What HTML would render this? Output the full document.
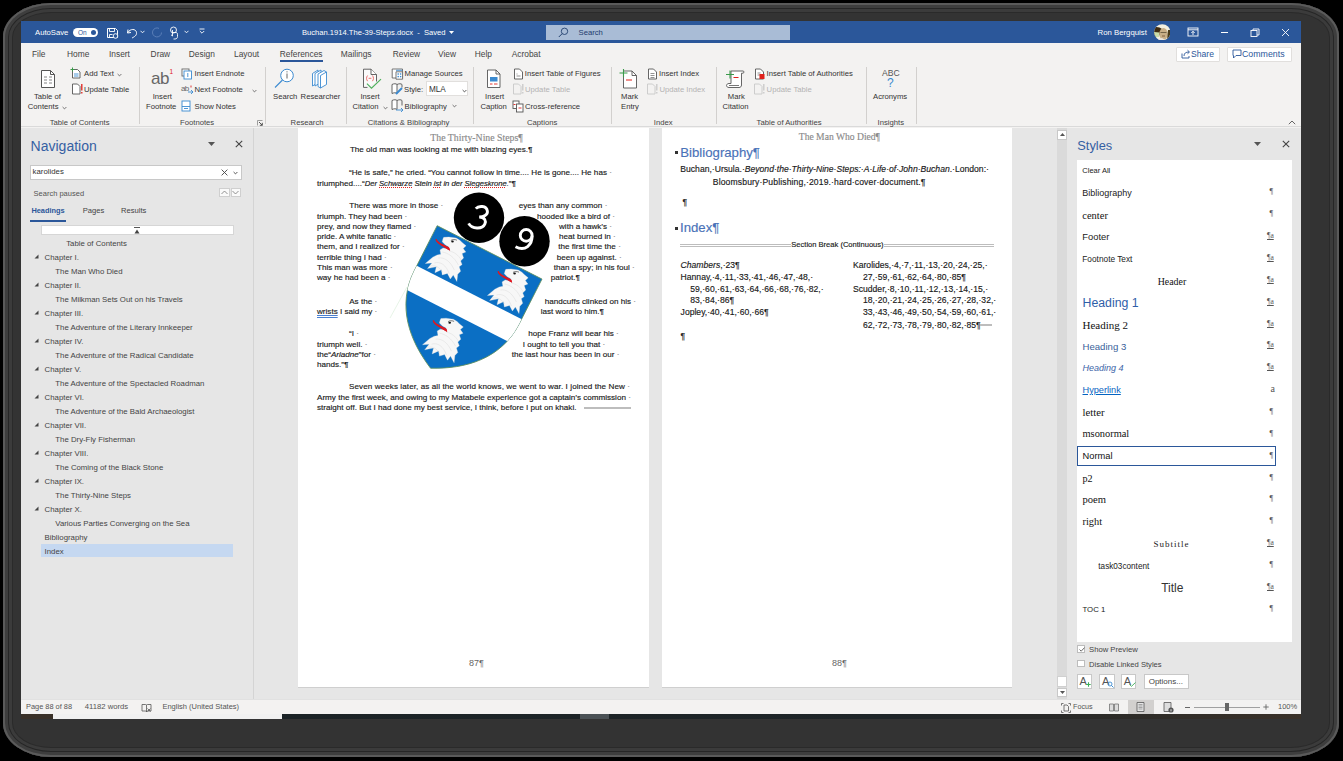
<!DOCTYPE html>
<html><head><meta charset="utf-8">
<style>
*{margin:0;padding:0;box-sizing:border-box}
html,body{width:1343px;height:761px;overflow:hidden;background:#000;font-family:"Liberation Sans",sans-serif}
.a{position:absolute;white-space:pre}
.pg .a{-webkit-text-stroke:0.15px currentColor}
#shadow{position:absolute;left:3px;top:3px;width:1336px;height:754px;border-radius:48px / 34px;background:#333;box-shadow:inset 0 0 0 2px #5a5a5a, inset 0 0 0 5px #3e3e3e, inset 0 0 0 6px #262626, inset 0 0 0 9px #3b3b3b, inset 0 0 0 10px #2a2a2a}
#win{position:absolute;left:21px;top:21px;width:1280px;height:693px;background:#f3f2f1;overflow:hidden}
#title{position:absolute;left:0;top:0;width:1280px;height:22px;background:#2b579a;color:#fff}
#tabs{position:absolute;left:0;top:22px;width:1280px;height:20px;background:#f3f2f1}
#ribbon{position:absolute;left:0;top:42px;width:1280px;height:64px;background:#f3f2f1;border-bottom:1px solid #dadada}
#nav{position:absolute;left:0;top:107px;width:233px;height:571px;background:#e6e6e6;border-right:1px solid #d4d4d4}
#doc{position:absolute;left:233px;top:107px;width:815px;height:571px;background:#e6e6e6}
#styles{position:absolute;left:1048px;top:107px;width:232px;height:571px;background:#e6e6e6}
#status{position:absolute;left:0;top:678px;width:1280px;height:15px;background:#f3f2f1;border-top:1px solid #e1e1e1}
u.sq{text-decoration:underline dotted #e02020;text-decoration-thickness:1px;text-underline-offset:1px}
u.gr{text-decoration:underline double #4a7fd0;text-decoration-thickness:0.5px}
.t{position:absolute;white-space:pre;font-size:7.7px;color:#444;line-height:10px}
</style></head><body>
<div id="shadow"></div>
<div id="win">
  <div id="title">
    <div class="a" style="left:14px;top:6.6px;font-size:7.7px;line-height:10px;color:#fff">AutoSave</div>
    <div class="a" style="left:52px;top:6.5px;width:25px;height:9px;border-radius:5px;background:#fff"></div>
    <div class="a" style="left:57px;top:6.5px;font-size:6.5px;line-height:9px;color:#2b579a">On</div>
    <div class="a" style="left:69.5px;top:8.5px;width:5px;height:5px;border-radius:50%;background:#2b579a"></div>
    <svg class="a" style="left:85px;top:6px" width="13" height="12" viewBox="0 0 13 12"><path d="M1.5 1.5h8l2 2v7h-10z" fill="none" stroke="#fff" stroke-width="1"/><path d="M3.5 1.5v3h5v-3M3.5 10.5v-3h3" fill="none" stroke="#fff" stroke-width="0.9"/><circle cx="9.5" cy="9" r="2.3" fill="#2b579a" stroke="#fff" stroke-width="0.9"/></svg>
    <svg class="a" style="left:105px;top:5px" width="13" height="13" viewBox="0 0 13 13"><path d="M2 3.5 L1.5 7 L5 6.5" fill="none" stroke="#fff" stroke-width="1"/><path d="M2 6.5 C4 2.5 10 2.5 10.5 6.5 C11 9.5 8 11 6 12" fill="none" stroke="#fff" stroke-width="1"/></svg>
    <svg class="a" style="left:119px;top:9px" width="5" height="4" viewBox="0 0 5 4"><path d="M0.5 0.8 L2.5 2.8 L4.5 0.8" fill="none" stroke="#fff" stroke-width="0.9"/></svg>
    <svg class="a" style="left:130px;top:5px" width="13" height="13" viewBox="0 0 13 13"><path d="M10.5 6.5 A4.5 4.5 0 1 1 8 2.4" fill="none" stroke="#5b7fb8" stroke-width="1"/></svg>
    <svg class="a" style="left:148px;top:4.5px" width="11" height="14" viewBox="0 0 11 14"><circle cx="4.5" cy="4" r="3" fill="none" stroke="#fff" stroke-width="0.9"/><path d="M3.5 4v6l-1.5-1.2M3.5 6.5h3.5c1 0 1.5 .8 1.5 1.8v2.2c0 1.5-1 2.5-2.5 2.5h-1.5" fill="none" stroke="#fff" stroke-width="0.9"/></svg>
    <svg class="a" style="left:163px;top:9px" width="5" height="4" viewBox="0 0 5 4"><path d="M0.5 0.8 L2.5 2.8 L4.5 0.8" fill="none" stroke="#fff" stroke-width="0.9"/></svg>
    <svg class="a" style="left:178px;top:7px" width="6" height="7" viewBox="0 0 6 7"><path d="M0.5 1h5M0.8 3l2.2 2.2 2.2-2.2" fill="none" stroke="#fff" stroke-width="0.9"/></svg>
    <div class="a" style="left:281px;top:6.6px;font-size:7.6px;line-height:10px;color:#fff">Buchan.1914.The-39-Steps.docx  -  Saved</div>
    <svg class="a" style="left:428px;top:9.5px" width="5" height="3" viewBox="0 0 5 3"><path d="M0 0h5L2.5 3z" fill="#fff"/></svg>
    <div class="a" style="left:524.5px;top:4px;width:244px;height:14.6px;background:#a9bcd6"></div>
    <svg class="a" style="left:537px;top:5.5px" width="11" height="11" viewBox="0 0 11 11"><circle cx="6.5" cy="4.3" r="3.2" fill="none" stroke="#23416f" stroke-width="0.9"/><path d="M4.2 6.6 L0.8 10" stroke="#23416f" stroke-width="1"/></svg>
    <div class="a" style="left:557.5px;top:6.6px;font-size:7.7px;line-height:10px;color:#1f3d6e">Search</div>
    <div class="a" style="left:1076.5px;top:6.6px;font-size:7.8px;line-height:10px;color:#fff">Ron Bergquist</div>
    <svg class="a" style="left:1132.9px;top:2.7px" width="16.5" height="16.5" viewBox="0 0 16.5 16.5"><defs><clipPath id="av"><circle cx="8.25" cy="8.25" r="8.1"/></clipPath></defs><g clip-path="url(#av)"><rect width="16.5" height="16.5" fill="#f4f0e0"/><path d="M0 3.5 C3 2.5 6 3.5 8 5 L7 9 L4 13 L0 13z" fill="#3d2a10"/><path d="M0 8 L5.5 8.5 L5 13 L0 13z" fill="#c9dcaa"/><ellipse cx="9.5" cy="10" rx="4.2" ry="6" fill="#c9ae86"/><path d="M6.5 8.5h6" stroke="#6a5a40" stroke-width="0.9"/><path d="M8 12h3" stroke="#7a5a3a" stroke-width="0.9"/><path d="M14 6 L16.5 6 L16.5 16.5 L13 16.5z" fill="#4a3a1a"/><path d="M3 15 L8 14 L12 16.5 H3z" fill="#e8e4e0"/></g></svg>
    <svg class="a" style="left:1166px;top:6px" width="12" height="10" viewBox="0 0 12 10"><rect x="1" y="1" width="10" height="8" fill="none" stroke="#fff" stroke-width="0.9"/><path d="M1 2.8h10" stroke="#fff" stroke-width="0.9"/><path d="M6 8V4.3M4.3 6 6 4.3 7.7 6" fill="none" stroke="#fff" stroke-width="0.9"/></svg>
    <div class="a" style="left:1199.5px;top:10.5px;width:7px;height:1px;background:#fff"></div>
    <svg class="a" style="left:1229px;top:6.5px" width="10" height="9" viewBox="0 0 10 9"><rect x="1" y="2.5" width="6" height="6" fill="none" stroke="#fff" stroke-width="0.9"/><path d="M3 2.5V1h6v6H7" fill="none" stroke="#fff" stroke-width="0.9"/></svg>
    <svg class="a" style="left:1260px;top:6.5px" width="9" height="9" viewBox="0 0 9 9"><path d="M1 1l7 7M8 1L1 8" stroke="#fff" stroke-width="0.9"/></svg>
  </div>
  <div id="tabs">
    <div class="a" style="left:11px;top:5.8px;font-size:8.4px;line-height:10px;color:#444">File</div>
    <div class="a" style="left:46px;top:5.8px;font-size:8.4px;line-height:10px;color:#444">Home</div>
    <div class="a" style="left:88px;top:5.8px;font-size:8.4px;line-height:10px;color:#444">Insert</div>
    <div class="a" style="left:129.6px;top:5.8px;font-size:8.4px;line-height:10px;color:#444">Draw</div>
    <div class="a" style="left:167.8px;top:5.8px;font-size:8.4px;line-height:10px;color:#444">Design</div>
    <div class="a" style="left:213px;top:5.8px;font-size:8.4px;line-height:10px;color:#444">Layout</div>
    <div class="a" style="left:258.7px;top:5.8px;font-size:8.4px;line-height:10px;color:#444">References</div>
    <div class="a" style="left:319.8px;top:5.8px;font-size:8.4px;line-height:10px;color:#444">Mailings</div>
    <div class="a" style="left:371.7px;top:5.8px;font-size:8.4px;line-height:10px;color:#444">Review</div>
    <div class="a" style="left:417px;top:5.8px;font-size:8.4px;line-height:10px;color:#444">View</div>
    <div class="a" style="left:453.7px;top:5.8px;font-size:8.4px;line-height:10px;color:#444">Help</div>
    <div class="a" style="left:490.7px;top:5.8px;font-size:8.4px;line-height:10px;color:#444">Acrobat</div>
    <div class="a" style="left:259px;top:17px;width:43px;height:2px;background:#2b579a"></div>
    <div class="a" style="left:1155px;top:3.5px;width:44px;height:15px;background:#fff;border:1px solid #e1dfdd;border-radius:1px"></div>
    <svg class="a" style="left:1160px;top:6px" width="10" height="10" viewBox="0 0 10 10"><path d="M1 4.5v4.5h7v-2" fill="none" stroke="#2b579a" stroke-width="0.9"/><path d="M3 7c0-3 2-4 5-4M6.5 1.2 8.5 3 6.5 4.8" fill="none" stroke="#2b579a" stroke-width="0.9"/></svg>
    <div class="a" style="left:1170px;top:6px;font-size:8.6px;line-height:10px;color:#2b579a">Share</div>
    <div class="a" style="left:1206px;top:3.5px;width:65px;height:15px;background:#fff;border:1px solid #e1dfdd;border-radius:1px"></div>
    <svg class="a" style="left:1211px;top:6px" width="10" height="10" viewBox="0 0 10 10"><path d="M1 1h8v5.5H4L1.5 9V6.5H1z" fill="none" stroke="#2b579a" stroke-width="0.9"/></svg>
    <div class="a" style="left:1221px;top:6px;font-size:8.8px;line-height:10px;color:#2b579a">Comments</div>
  </div>
  <div id="ribbon">
    <div class="a" style="left:117.6px;top:3.8px;width:1px;height:57.6px;background:#d2d0ce"></div>
    <div class="a" style="left:244.4px;top:3.8px;width:1px;height:57.6px;background:#d2d0ce"></div>
    <div class="a" style="left:324.8px;top:3.8px;width:1px;height:57.6px;background:#d2d0ce"></div>
    <div class="a" style="left:452.4px;top:3.8px;width:1px;height:57.6px;background:#d2d0ce"></div>
    <div class="a" style="left:589.6px;top:3.8px;width:1px;height:57.6px;background:#d2d0ce"></div>
    <div class="a" style="left:694.7px;top:3.8px;width:1px;height:57.6px;background:#d2d0ce"></div>
    <div class="a" style="left:845px;top:3.8px;width:1px;height:57.6px;background:#d2d0ce"></div>
    <div class="a" style="left:895px;top:3.8px;width:1px;height:57.6px;background:#d2d0ce"></div>
    <svg class="a" style="left:19px;top:5.5px" width="16" height="20" viewBox="0 0 16 20"><path d="M1.5 1.5h9l4 4v13h-13z" fill="#fff" stroke="#555" stroke-width="1"/><path d="M10.5 1.5v4h4" fill="none" stroke="#555" stroke-width="1"/><path d="M4 8h3M9 8h3M4 11h3M9 11h3M4 14h3M9 14h3" stroke="#777" stroke-width="0.9"/></svg>
    <div class="a" style="left:13px;top:28.8px;font-size:7.7px;line-height:10px;color:#333;">Table of</div>
    <div class="a" style="left:6.8px;top:39.4px;font-size:7.7px;line-height:10px;color:#333;">Contents</div>
    <svg class="a" style="left:41px;top:42.9px" width="5" height="4" viewBox="0 0 5 4"><path d="M0.6 1 L2.5 2.9 L4.4 1" fill="none" stroke="#555" stroke-width="0.8"/></svg>
    <svg class="a" style="left:49px;top:4px" width="12" height="12" viewBox="0 0 12 12"><path d="M2.5 2.5h5l2.5 2.5v6h-7.5z" fill="#fff" stroke="#555" stroke-width="0.9"/><path d="M0.5 2.5h4M2.5 0.5v4" stroke="#3a9a4a" stroke-width="1"/><path d="M4 7h4.5M4 9h4.5" stroke="#3b8ad0" stroke-width="0.9"/></svg>
    <div class="a" style="left:63px;top:5.8px;font-size:7.7px;line-height:10px;color:#333;">Add Text</div>
    <svg class="a" style="left:96px;top:9.8px" width="5" height="4" viewBox="0 0 5 4"><path d="M0.6 1 L2.5 2.9 L4.4 1" fill="none" stroke="#555" stroke-width="0.8"/></svg>
    <svg class="a" style="left:50px;top:20px" width="12" height="12" viewBox="0 0 12 12"><path d="M1.5 1h5l2.5 2.5v7.5h-7.5z" fill="#fff" stroke="#555" stroke-width="0.9"/><path d="M10.8 1v6.5M10.8 9v1.5" stroke="#e0201b" stroke-width="1.3"/></svg>
    <div class="a" style="left:63px;top:22.1px;font-size:7.7px;line-height:10px;color:#333;">Update Table</div>
    <div class="a" style="left:28.7px;top:55.1px;font-size:7.7px;line-height:10px;color:#333;color:#444">Table of Contents</div>
    <div class="a" style="left:130px;top:7px;font-size:17px;line-height:10px;color:#666;line-height:18px;letter-spacing:-0.5px">ab</div>
    <div class="a" style="left:148.5px;top:3.5px;font-size:6.5px;line-height:10px;color:#e0201b;">1</div>
    <div class="a" style="left:131.7px;top:28.8px;font-size:7.7px;line-height:10px;color:#333;">Insert</div>
    <div class="a" style="left:125px;top:39.4px;font-size:7.7px;line-height:10px;color:#333;">Footnote</div>
    <svg class="a" style="left:160px;top:5px" width="12" height="12" viewBox="0 0 12 12"><rect x="1" y="1" width="7" height="7" fill="#fff" stroke="#666" stroke-width="0.9"/><rect x="3" y="3" width="7.5" height="8" fill="#fff" stroke="#3b8ad0" stroke-width="0.9"/><path d="M6.8 5v4" stroke="#3b8ad0" stroke-width="0.9"/></svg>
    <div class="a" style="left:173.5px;top:5.8px;font-size:7.7px;line-height:10px;color:#333;">Insert Endnote</div>
    <div class="a" style="left:160px;top:20.6px;font-size:8px;line-height:10px;color:#666;letter-spacing:-0.6px">ab</div>
    <svg class="a" style="left:166px;top:22px" width="7" height="11" viewBox="0 0 7 11"><path d="M4 0.5v2" stroke="#e0201b" stroke-width="0.9"/><path d="M1 7h5M4 5l2 2-2 2" fill="none" stroke="#3b8ad0" stroke-width="0.9"/></svg>
    <div class="a" style="left:173.5px;top:22.1px;font-size:7.7px;line-height:10px;color:#333;">Next Footnote</div>
    <svg class="a" style="left:231px;top:25.6px" width="5" height="4" viewBox="0 0 5 4"><path d="M0.6 1 L2.5 2.9 L4.4 1" fill="none" stroke="#555" stroke-width="0.8"/></svg>
    <svg class="a" style="left:160px;top:37px" width="10" height="12" viewBox="0 0 10 12"><rect x="1" y="1" width="8" height="10" fill="#fff" stroke="#3b8ad0" stroke-width="0.9"/><path d="M1 6.5h8M3 8.5h4" stroke="#3b8ad0" stroke-width="0.9"/></svg>
    <div class="a" style="left:173.5px;top:39.2px;font-size:7.7px;line-height:10px;color:#333;">Show Notes</div>
    <div class="a" style="left:159px;top:55.1px;font-size:7.7px;line-height:10px;color:#333;color:#444">Footnotes</div>
    <svg class="a" style="left:236.3px;top:56.5px" width="6" height="6" viewBox="0 0 6 6"><path d="M0.5 5.5v-5h5" fill="none" stroke="#888" stroke-width="0.8"/><path d="M2 2 5.2 5.2M5.3 2.8V5.3H2.8" fill="none" stroke="#444" stroke-width="0.9"/></svg>
    <svg class="a" style="left:253px;top:5px" width="21" height="21" viewBox="0 0 21 21"><circle cx="13" cy="7.5" r="6.3" fill="#fff" stroke="#3b8ad0" stroke-width="1"/><path d="M8.5 12 L1 19.5" stroke="#3b8ad0" stroke-width="1.1"/><path d="M13 5.5v5" stroke="#555" stroke-width="0.9"/><circle cx="13" cy="3.8" r="0.6" fill="#555"/></svg>
    <div class="a" style="left:252px;top:28.8px;font-size:7.7px;line-height:10px;color:#333;">Search</div>
    <svg class="a" style="left:290px;top:5px" width="17" height="21" viewBox="0 0 17 21"><path d="M1.5 5.5 7 2v12.5l-5.5 3.5z" fill="#fff" stroke="#3b8ad0" stroke-width="0.9"/><path d="M4 5.5 10 2v12.5L4 18z" fill="#fff" stroke="#3b8ad0" stroke-width="0.9"/><path d="M7 6 13 2.5l2.5 1.5v12.5L9.5 20 7 18.5z" fill="#fff" stroke="#3b8ad0" stroke-width="0.9"/><path d="M9.5 7.5 15.5 4M9.5 7.5V20" fill="none" stroke="#3b8ad0" stroke-width="0.9"/></svg>
    <div class="a" style="left:279.6px;top:28.8px;font-size:7.7px;line-height:10px;color:#333;">Researcher</div>
    <div class="a" style="left:269.6px;top:55.1px;font-size:7.7px;line-height:10px;color:#333;color:#444">Research</div>
    <svg class="a" style="left:341px;top:5px" width="21" height="22" viewBox="0 0 21 22"><path d="M5.5 19.4H1.5V1.2h7.5l5.5 5.3v7" fill="#fafafa" stroke="#555" stroke-width="0.9"/><path d="M9 1.2v5.3h5.5" fill="#fff" stroke="#555" stroke-width="0.9"/><path d="M5.6 7.5c-1.4 1.7-1.4 4 0 5.7M10.4 7.5c1.4 1.7 1.4 4 0 5.7M6.6 10.3h2.8" fill="none" stroke="#e96060" stroke-width="0.9"/><path d="M4.9 15.6 9.5 20.2 19 11.2" fill="none" stroke="#4caf5a" stroke-width="1.1"/></svg>
    <div class="a" style="left:339.4px;top:28.8px;font-size:7.7px;line-height:10px;color:#333;">Insert</div>
    <div class="a" style="left:331.4px;top:39.4px;font-size:7.7px;line-height:10px;color:#333;">Citation</div>
    <svg class="a" style="left:362px;top:42.9px" width="5" height="4" viewBox="0 0 5 4"><path d="M0.6 1 L2.5 2.9 L4.4 1" fill="none" stroke="#555" stroke-width="0.8"/></svg>
    <svg class="a" style="left:369.5px;top:4.5px" width="13" height="12" viewBox="0 0 13 12"><path d="M1.2 1h10.3v9H1.2z" fill="#fff" stroke="#666" stroke-width="0.9"/><path d="M5 2.3h6.3" stroke="#3b8ad0" stroke-width="0.9"/><path d="M5 3.8h6.6v7.4H5z" fill="#fff" stroke="#666" stroke-width="0.9"/><rect x="6.5" y="5.3" width="1.4" height="1.4" fill="#3b8ad0"/><rect x="8.9" y="5.3" width="1.4" height="1.4" fill="#3b8ad0"/><rect x="6.5" y="7.9" width="1.4" height="1.4" fill="#3b8ad0"/><rect x="8.9" y="7.9" width="1.4" height="1.4" fill="#3b8ad0"/></svg>
    <div class="a" style="left:383.6px;top:5.8px;font-size:7.7px;line-height:10px;color:#333;">Manage Sources</div>
    <svg class="a" style="left:369.5px;top:19.5px" width="12" height="13" viewBox="0 0 12 13"><path d="M1 1.5c2-1 4-1 5 0v9c-1-1-3-1-5 0z" fill="#fff" stroke="#555" stroke-width="0.9"/><path d="M6 1.5c2-1 4-1 5 0v3" fill="none" stroke="#555" stroke-width="0.9"/><path d="M11 5 5 11" stroke="#3b8ad0" stroke-width="2"/></svg>
    <div class="a" style="left:383px;top:22.1px;font-size:7.7px;line-height:10px;color:#333;">Style:</div>
    <div class="a" style="left:405px;top:18.4px;width:42.3px;height:14.5px;background:#fff;border:1px solid #e1dfdd"></div>
    <div class="a" style="left:408px;top:22.1px;font-size:8.2px;line-height:10px;color:#333;">MLA</div>
    <svg class="a" style="left:440.5px;top:25.6px" width="5" height="4" viewBox="0 0 5 4"><path d="M0.6 1 L2.5 2.9 L4.4 1" fill="none" stroke="#333" stroke-width="0.8"/></svg>
    <svg class="a" style="left:369.5px;top:36px" width="13" height="13" viewBox="0 0 13 13"><path d="M1 1.5c2-1 4-1 5 0v9c-1-1-3-1-5 0z" fill="#fff" stroke="#555" stroke-width="0.9"/><path d="M6 1.5c2-1 4-1 5 0v5" fill="none" stroke="#555" stroke-width="0.9"/><path d="M5 11h7M10 9l2 2-2 2" fill="none" stroke="#3b8ad0" stroke-width="0.9"/></svg>
    <div class="a" style="left:383.6px;top:39.2px;font-size:7.7px;line-height:10px;color:#333;">Bibliography</div>
    <svg class="a" style="left:431px;top:41.4px" width="5" height="4" viewBox="0 0 5 4"><path d="M0.6 1 L2.5 2.9 L4.4 1" fill="none" stroke="#555" stroke-width="0.8"/></svg>
    <div class="a" style="left:346.8px;top:55.1px;font-size:7.7px;line-height:10px;color:#333;color:#444">Citations &amp; Bibliography</div>
    <svg class="a" style="left:465px;top:5.5px" width="16" height="20" viewBox="0 0 16 20"><path d="M1.5 1h8.5l4 4v13.5h-12.5z" fill="#fff" stroke="#555" stroke-width="0.9"/><path d="M10 1v4h4" fill="none" stroke="#555" stroke-width="0.9"/><rect x="4" y="8" width="7.5" height="4.5" fill="#3b8ad0"/><path d="M4 15h2.5M8 15h3.5" stroke="#e0201b" stroke-width="0.9"/></svg>
    <div class="a" style="left:464px;top:28.8px;font-size:7.7px;line-height:10px;color:#333;">Insert</div>
    <div class="a" style="left:459.4px;top:39.4px;font-size:7.7px;line-height:10px;color:#333;">Caption</div>
    <svg class="a" style="left:491.5px;top:4.5px" width="11" height="12" viewBox="0 0 11 12"><path d="M1.5 1h5l3 3v7h-8z" fill="#fff" stroke="#555" stroke-width="0.9"/><path d="M3.5 6h1M3.5 8h4" stroke="#777" stroke-width="0.8"/></svg>
    <div class="a" style="left:503.8px;top:5.8px;font-size:7.7px;line-height:10px;color:#333;">Insert Table of Figures</div>
    <svg class="a" style="left:491px;top:20px" width="12" height="12" viewBox="0 0 12 12"><path d="M1.5 1h5l2.5 2.5v7.5h-7.5z" fill="#f3f2f1" stroke="#c8c8c8" stroke-width="0.9"/><path d="M10.8 1v6.5M10.8 9v1.5" stroke="#c8c8c8" stroke-width="1.3"/></svg>
    <div class="a" style="left:504px;top:22.1px;font-size:7.7px;line-height:10px;color:#b3b3b3;">Update Table</div>
    <svg class="a" style="left:491px;top:36.5px" width="12" height="13" viewBox="0 0 12 13"><rect x="1" y="1" width="6" height="7.5" fill="#fff" stroke="#555" stroke-width="0.9"/><rect x="4.5" y="4" width="6.5" height="8" fill="#fff" stroke="#555" stroke-width="0.9"/><path d="M6.5 8h3M1.5 4.5h2" stroke="#e0201b" stroke-width="0.9"/></svg>
    <div class="a" style="left:504px;top:39.2px;font-size:7.7px;line-height:10px;color:#333;">Cross-reference</div>
    <div class="a" style="left:506px;top:55.1px;font-size:7.7px;line-height:10px;color:#333;color:#444">Captions</div>
    <svg class="a" style="left:598px;top:4.5px" width="19" height="21" viewBox="0 0 19 21"><path d="M4.5 3h8.5l4.5 4.5v12.5h-13z" fill="#fff" stroke="#555" stroke-width="0.9"/><path d="M13 3v4.5h4.5" fill="none" stroke="#555" stroke-width="0.9"/><path d="M0.5 5h8M4.5 1v8" stroke="#3a9a4a" stroke-width="1.1"/><path d="M7 12h6" stroke="#e0201b" stroke-width="1"/></svg>
    <div class="a" style="left:600px;top:28.8px;font-size:7.7px;line-height:10px;color:#333;">Mark</div>
    <div class="a" style="left:600px;top:39.4px;font-size:7.7px;line-height:10px;color:#333;">Entry</div>
    <svg class="a" style="left:626px;top:4.5px" width="11" height="12" viewBox="0 0 11 12"><path d="M1.5 1h5l3 3v7h-8z" fill="#fff" stroke="#555" stroke-width="0.9"/><path d="M3.5 5.5h4M3.5 7.5h4M3.5 9.5h4" stroke="#777" stroke-width="0.8"/></svg>
    <div class="a" style="left:638px;top:5.8px;font-size:7.7px;line-height:10px;color:#333;">Insert Index</div>
    <svg class="a" style="left:625px;top:20px" width="12" height="12" viewBox="0 0 12 12"><path d="M1.5 1h5l2.5 2.5v7.5h-7.5z" fill="#f3f2f1" stroke="#c8c8c8" stroke-width="0.9"/><path d="M10.8 1v6.5M10.8 9v1.5" stroke="#c8c8c8" stroke-width="1.3"/></svg>
    <div class="a" style="left:638.4px;top:22.1px;font-size:7.7px;line-height:10px;color:#b3b3b3;">Update Index</div>
    <div class="a" style="left:632.8px;top:55.1px;font-size:7.7px;line-height:10px;color:#333;color:#444">Index</div>
    <svg class="a" style="left:704px;top:4.5px" width="21" height="21" viewBox="0 0 21 21"><path d="M6 3h12c1.2 0 1.5 1.8 0 2.2h-1.5V17c0 1.5-1 2.5-2.5 2.5H4c-1.5 0-2.5-1-2.5-2s1-2 2.5-2h2z" fill="#fff" stroke="#555" stroke-width="0.9"/><path d="M4 17.5h10" stroke="#555" stroke-width="0.8"/><path d="M1 6.5h8M5 2.5v8" stroke="#3a9a4a" stroke-width="1.1"/><path d="M8.5 9.5h5" stroke="#e0201b" stroke-width="1"/></svg>
    <div class="a" style="left:706.8px;top:28.8px;font-size:7.7px;line-height:10px;color:#333;">Mark</div>
    <div class="a" style="left:701.4px;top:39.4px;font-size:7.7px;line-height:10px;color:#333;">Citation</div>
    <svg class="a" style="left:733px;top:4.5px" width="12" height="12" viewBox="0 0 12 12"><path d="M1.5 1h5l3 3v7h-8z" fill="#fff" stroke="#555" stroke-width="0.9"/><path d="M3.5 5h3M3.5 7h3" stroke="#777" stroke-width="0.8"/><rect x="5.5" y="6" width="5" height="5" fill="#e0201b"/></svg>
    <div class="a" style="left:745.6px;top:5.8px;font-size:7.7px;line-height:10px;color:#333;">Insert Table of Authorities</div>
    <svg class="a" style="left:732px;top:20px" width="12" height="12" viewBox="0 0 12 12"><path d="M1.5 1h5l2.5 2.5v7.5h-7.5z" fill="#f3f2f1" stroke="#c8c8c8" stroke-width="0.9"/><path d="M10.8 1v6.5M10.8 9v1.5" stroke="#c8c8c8" stroke-width="1.3"/></svg>
    <div class="a" style="left:745.6px;top:22.1px;font-size:7.7px;line-height:10px;color:#b3b3b3;">Update Table</div>
    <div class="a" style="left:735.6px;top:55.1px;font-size:7.7px;line-height:10px;color:#333;color:#444">Table of Authorities</div>
    <div class="a" style="left:861px;top:5.3px;font-size:8.6px;line-height:10px;color:#555;">ABC</div>
    <div class="a" style="left:866px;top:14px;font-size:12px;line-height:10px;color:#3b8ad0;line-height:13px">?</div>
    <div class="a" style="left:852px;top:28.8px;font-size:7.7px;line-height:10px;color:#333;">Acronyms</div>
    <div class="a" style="left:856.5px;top:55.1px;font-size:7.7px;line-height:10px;color:#333;color:#444">Insights</div>
    <svg class="a" style="left:1267px;top:57px" width="8" height="5" viewBox="0 0 8 5"><path d="M0.8 4.2 4 1 7.2 4.2" fill="none" stroke="#555" stroke-width="0.9"/></svg>
  </div>
  <div id="nav">
    <div class="a" style="left:9.6px;top:10.2px;font-size:14px;line-height:16px;color:#3560a3">Navigation</div>
    <svg class="a" style="left:186.5px;top:13.5px" width="7" height="4" viewBox="0 0 7 4"><path d="M0 0h7L3.5 4z" fill="#555"/></svg>
    <svg class="a" style="left:213.5px;top:12.3px" width="8" height="8" viewBox="0 0 8 8"><path d="M0.8 0.8l6.4 6.4M7.2 0.8L0.8 7.2" stroke="#444" stroke-width="1.1"/></svg>
    <div class="a" style="left:9.2px;top:36.8px;width:211.4px;height:15px;background:#fff;border:1px solid #c8c8c8"></div>
    <div class="a" style="left:11.6px;top:39.1px;font-size:7.8px;line-height:10px;color:#333;">karolides</div>
    <svg class="a" style="left:199.5px;top:41px" width="7" height="7" viewBox="0 0 7 7"><path d="M0.6 0.6l5.8 5.8M6.4 0.6L0.6 6.4" stroke="#444" stroke-width="0.9"/></svg>
    <svg class="a" style="left:212px;top:43px" width="5" height="4" viewBox="0 0 5 4"><path d="M0.6 1 2.5 2.9 4.4 1" fill="none" stroke="#444" stroke-width="0.9"/></svg>
    <div class="a" style="left:12.6px;top:60.5px;font-size:7.5px;line-height:10px;color:#555;">Search paused</div>
    <div class="a" style="left:198.3px;top:59.9px;width:10.3px;height:8.9px;background:#fafafa;border:1px solid #cfcfcf"></div>
    <div class="a" style="left:209.6px;top:59.9px;width:10.3px;height:8.9px;background:#fafafa;border:1px solid #cfcfcf"></div>
    <svg class="a" style="left:200px;top:61.5px" width="7" height="5" viewBox="0 0 7 5"><path d="M0.5 4 3.5 1 6.5 4" fill="none" stroke="#777" stroke-width="0.8"/></svg>
    <svg class="a" style="left:211.3px;top:62px" width="7" height="5" viewBox="0 0 7 5"><path d="M0.5 1 3.5 4 6.5 1" fill="none" stroke="#777" stroke-width="0.8"/></svg>
    <div class="a" style="left:10.4px;top:77.9px;font-size:7.4px;line-height:10px;color:#2b579a;font-weight:bold">Headings</div>
    <div class="a" style="left:61.8px;top:77.9px;font-size:7.6px;line-height:10px;color:#444;">Pages</div>
    <div class="a" style="left:100px;top:77.9px;font-size:7.6px;line-height:10px;color:#444;">Results</div>
    <div class="a" style="left:9.2px;top:92.4px;width:35.5px;height:1.7px;background:#2b579a"></div>
    <div class="a" style="left:19.5px;top:96.5px;width:193px;height:10.8px;background:#fff;border:1px solid #d6d6d6"></div>
    <svg class="a" style="left:113px;top:98.5px" width="6" height="7" viewBox="0 0 6 7"><path d="M0 0.5h6" stroke="#444" stroke-width="0.9"/><path d="M0.5 6.5h5L3 2.5z" fill="#444"/></svg>
    <div class="a" style="left:19.8px;top:415.7px;width:192px;height:13.1px;background:#c5d8f1"></div>
    <div class="a" style="left:45.2px;top:110.5px;font-size:7.8px;line-height:10px;color:#444;">Table of Contents</div>
    <div class="a" style="left:23.6px;top:124.5px;font-size:7.8px;line-height:10px;color:#444;">Chapter I.</div>
    <svg class="a" style="left:13px;top:126.4px" width="5" height="5" viewBox="0 0 5 5"><path d="M4.5 0.5V4.5H0.5z" fill="#444"/></svg>
    <div class="a" style="left:34.3px;top:138.5px;font-size:7.8px;line-height:10px;color:#444;">The Man Who Died</div>
    <div class="a" style="left:23.6px;top:152.5px;font-size:7.8px;line-height:10px;color:#444;">Chapter II.</div>
    <svg class="a" style="left:13px;top:154.4px" width="5" height="5" viewBox="0 0 5 5"><path d="M4.5 0.5V4.5H0.5z" fill="#444"/></svg>
    <div class="a" style="left:34.3px;top:166.5px;font-size:7.8px;line-height:10px;color:#444;">The Milkman Sets Out on his Travels</div>
    <div class="a" style="left:23.6px;top:180.5px;font-size:7.8px;line-height:10px;color:#444;">Chapter III.</div>
    <svg class="a" style="left:13px;top:182.4px" width="5" height="5" viewBox="0 0 5 5"><path d="M4.5 0.5V4.5H0.5z" fill="#444"/></svg>
    <div class="a" style="left:34.3px;top:194.5px;font-size:7.8px;line-height:10px;color:#444;">The Adventure of the Literary Innkeeper</div>
    <div class="a" style="left:23.6px;top:208.5px;font-size:7.8px;line-height:10px;color:#444;">Chapter IV.</div>
    <svg class="a" style="left:13px;top:210.4px" width="5" height="5" viewBox="0 0 5 5"><path d="M4.5 0.5V4.5H0.5z" fill="#444"/></svg>
    <div class="a" style="left:34.3px;top:222.5px;font-size:7.8px;line-height:10px;color:#444;">The Adventure of the Radical Candidate</div>
    <div class="a" style="left:23.6px;top:236.5px;font-size:7.8px;line-height:10px;color:#444;">Chapter V.</div>
    <svg class="a" style="left:13px;top:238.4px" width="5" height="5" viewBox="0 0 5 5"><path d="M4.5 0.5V4.5H0.5z" fill="#444"/></svg>
    <div class="a" style="left:34.3px;top:250.5px;font-size:7.8px;line-height:10px;color:#444;">The Adventure of the Spectacled Roadman</div>
    <div class="a" style="left:23.6px;top:264.5px;font-size:7.8px;line-height:10px;color:#444;">Chapter VI.</div>
    <svg class="a" style="left:13px;top:266.4px" width="5" height="5" viewBox="0 0 5 5"><path d="M4.5 0.5V4.5H0.5z" fill="#444"/></svg>
    <div class="a" style="left:34.3px;top:278.5px;font-size:7.8px;line-height:10px;color:#444;">The Adventure of the Bald Archaeologist</div>
    <div class="a" style="left:23.6px;top:292.5px;font-size:7.8px;line-height:10px;color:#444;">Chapter VII.</div>
    <svg class="a" style="left:13px;top:294.4px" width="5" height="5" viewBox="0 0 5 5"><path d="M4.5 0.5V4.5H0.5z" fill="#444"/></svg>
    <div class="a" style="left:34.3px;top:306.5px;font-size:7.8px;line-height:10px;color:#444;">The Dry-Fly Fisherman</div>
    <div class="a" style="left:23.6px;top:320.5px;font-size:7.8px;line-height:10px;color:#444;">Chapter VIII.</div>
    <svg class="a" style="left:13px;top:322.4px" width="5" height="5" viewBox="0 0 5 5"><path d="M4.5 0.5V4.5H0.5z" fill="#444"/></svg>
    <div class="a" style="left:34.3px;top:334.5px;font-size:7.8px;line-height:10px;color:#444;">The Coming of the Black Stone</div>
    <div class="a" style="left:23.6px;top:348.5px;font-size:7.8px;line-height:10px;color:#444;">Chapter IX.</div>
    <svg class="a" style="left:13px;top:350.4px" width="5" height="5" viewBox="0 0 5 5"><path d="M4.5 0.5V4.5H0.5z" fill="#444"/></svg>
    <div class="a" style="left:34.3px;top:362.5px;font-size:7.8px;line-height:10px;color:#444;">The Thirty-Nine Steps</div>
    <div class="a" style="left:23.6px;top:376.5px;font-size:7.8px;line-height:10px;color:#444;">Chapter X.</div>
    <svg class="a" style="left:13px;top:378.4px" width="5" height="5" viewBox="0 0 5 5"><path d="M4.5 0.5V4.5H0.5z" fill="#444"/></svg>
    <div class="a" style="left:34.3px;top:390.5px;font-size:7.8px;line-height:10px;color:#444;">Various Parties Converging on the Sea</div>
    <div class="a" style="left:23.6px;top:404.5px;font-size:7.8px;line-height:10px;color:#444;">Bibliography</div>
    <div class="a" style="left:23.6px;top:418.5px;font-size:7.8px;line-height:10px;color:#444;">Index</div>
  </div>
  <div id="doc">
    <div class="a pg" style="left:44px;top:0;width:351px;height:559px;background:#fff;box-shadow:0 1px 0 #cfcfcf">
    <div class="a" style="left:132.3px;top:4.5px;font-size:9.8px;line-height:10px;color:#8a8a8a;font-family:'Liberation Serif',serif">The Thirty-Nine Steps¶</div>
    <div class="a" style="left:51.9px;top:16.5px;font-size:8.1px;line-height:10px;color:#1a1a1a;">The old man was looking at me with blazing eyes.¶</div>
    <div class="a" style="left:51px;top:40.0px;font-size:8.1px;line-height:10px;color:#1a1a1a;">“He is safe,” he cried. “You cannot follow in time.... He is gone.... He has <span style="color:#999">·</span></div>
    <div class="a" style="left:19px;top:50.8px;font-size:8.1px;line-height:10px;color:#1a1a1a;">triumphed....“<i style="font-size:7.7px;letter-spacing:-0.05px">Der <u class="sq">Schwarze</u> Stein <u class="sq">ist</u> in der <u class="sq">Siegeskrone</u>.</i>”¶</div>
    <div class="a" style="left:51.2px;top:73.1px;font-size:8.1px;line-height:10px;color:#1a1a1a;">There was more in those <span style="color:#999">·</span></div>
    <div class="a" style="left:220.7px;top:73.1px;font-size:8.1px;line-height:10px;color:#1a1a1a;">eyes than any common <span style="color:#999">·</span></div>
    <div class="a" style="left:19px;top:83.8px;font-size:8.1px;line-height:10px;color:#1a1a1a;">triumph. They had been <span style="color:#999">·</span></div>
    <div class="a" style="left:239px;top:83.8px;font-size:8.1px;line-height:10px;color:#1a1a1a;">hooded like a bird of <span style="color:#999">·</span></div>
    <div class="a" style="left:19px;top:94.2px;font-size:8.1px;line-height:10px;color:#1a1a1a;">prey, and now they flamed <span style="color:#999">·</span></div>
    <div class="a" style="left:261px;top:94.2px;font-size:8.1px;line-height:10px;color:#1a1a1a;">with a hawk’s <span style="color:#999">·</span></div>
    <div class="a" style="left:19px;top:104.2px;font-size:8.1px;line-height:10px;color:#1a1a1a;">pride. A white fanatic <span style="color:#999">·</span></div>
    <div class="a" style="left:261px;top:104.2px;font-size:8.1px;line-height:10px;color:#1a1a1a;">heat burned in <span style="color:#999">·</span></div>
    <div class="a" style="left:19px;top:114.3px;font-size:8.1px;line-height:10px;color:#1a1a1a;">them, and I realized for <span style="color:#999">·</span></div>
    <div class="a" style="left:260.3px;top:114.3px;font-size:8.1px;line-height:10px;color:#1a1a1a;">the first time the <span style="color:#999">·</span></div>
    <div class="a" style="left:19px;top:124.7px;font-size:8.1px;line-height:10px;color:#1a1a1a;">terrible thing I had <span style="color:#999">·</span></div>
    <div class="a" style="left:258.8px;top:124.7px;font-size:8.1px;line-height:10px;color:#1a1a1a;">been up against. <span style="color:#999">·</span></div>
    <div class="a" style="left:19px;top:135.1px;font-size:8.1px;line-height:10px;color:#1a1a1a;">This man was more <span style="color:#999">·</span></div>
    <div class="a" style="left:255.8px;top:135.1px;font-size:8.1px;line-height:10px;color:#1a1a1a;">than a spy; in his foul <span style="color:#999">·</span></div>
    <div class="a" style="left:19px;top:144.8px;font-size:8.1px;line-height:10px;color:#1a1a1a;">way he had been a <span style="color:#999">·</span></div>
    <div class="a" style="left:252.7px;top:144.8px;font-size:8.1px;line-height:10px;color:#1a1a1a;">patriot.¶</div>
    <div class="a" style="left:51.2px;top:168.5px;font-size:8.1px;line-height:10px;color:#1a1a1a;">As the <span style="color:#999">·</span></div>
    <div class="a" style="left:246.8px;top:168.5px;font-size:8.1px;line-height:10px;color:#1a1a1a;">handcuffs clinked on his <span style="color:#999">·</span></div>
    <div class="a" style="left:19px;top:178.7px;font-size:8.1px;line-height:10px;color:#1a1a1a;"><u class="gr">wrists</u> I said my <span style="color:#999">·</span></div>
    <div class="a" style="left:242.7px;top:178.7px;font-size:8.1px;line-height:10px;color:#1a1a1a;">last word to him.¶</div>
    <div class="a" style="left:51px;top:200.7px;font-size:8.1px;line-height:10px;color:#1a1a1a;">“I <span style="color:#999">·</span></div>
    <div class="a" style="left:230.3px;top:200.7px;font-size:8.1px;line-height:10px;color:#1a1a1a;">hope Franz will bear his <span style="color:#999">·</span></div>
    <div class="a" style="left:19px;top:211.7px;font-size:8.1px;line-height:10px;color:#1a1a1a;">triumph well. <span style="color:#999">·</span></div>
    <div class="a" style="left:224.8px;top:211.7px;font-size:8.1px;line-height:10px;color:#1a1a1a;">I ought to tell you that <span style="color:#999">·</span></div>
    <div class="a" style="left:19px;top:221.6px;font-size:8.1px;line-height:10px;color:#1a1a1a;">the“<i>Ariadne</i>”for <span style="color:#999">·</span></div>
    <div class="a" style="left:213.8px;top:221.6px;font-size:8.1px;line-height:10px;color:#1a1a1a;">the last hour has been in our <span style="color:#999">·</span></div>
    <div class="a" style="left:19px;top:231.8px;font-size:8.1px;line-height:10px;color:#1a1a1a;">hands.”¶</div>
    <div class="a" style="left:51px;top:253.8px;font-size:8.1px;line-height:10px;color:#1a1a1a;letter-spacing:0.08px;">Seven weeks later, as all the world knows, we went to war. I joined the New <span style="color:#999">·</span></div>
    <div class="a" style="left:19px;top:264.8px;font-size:8.1px;line-height:10px;color:#1a1a1a;">Army the first week, and owing to my Matabele experience got a captain’s commission <span style="color:#999">·</span></div>
    <div class="a" style="left:19px;top:275.1px;font-size:8.1px;line-height:10px;color:#1a1a1a;">straight off. But I had done my best service, I think, before I put on khaki. </div>
    <div class="a" style="left:286px;top:278.5px;width:47px;height:2px;border-top:1px solid #bdbdbd;border-bottom:1px solid #bdbdbd"></div>
    <div class="a" style="left:171px;top:529.6px;font-size:9px;line-height:10px;color:#666;-webkit-text-stroke:0">87¶</div>
    </div>
    <div class="a pg" style="left:408px;top:0;width:350px;height:559px;background:#fff;box-shadow:0 1px 0 #cfcfcf">
    <div class="a" style="left:136.8px;top:4.4px;font-size:9.6px;line-height:10px;color:#8a8a8a;font-family:'Liberation Serif',serif">The Man Who Died¶</div>
    <div class="a" style="left:12.5px;top:23px;width:3px;height:3px;background:#333"></div>
    <div class="a" style="left:18.3px;top:16.5px;font-size:13.2px;line-height:16px;color:#4a72b8">Bibliography¶</div>
    <div class="a" style="left:18.3px;top:36px;font-size:8.6px;line-height:10px;color:#1a1a1a;">Buchan,·Ursula.·<i>Beyond·the·Thirty-Nine·Steps:·A·Life·of·John·Buchan</i>.·London:·</div>
    <div class="a" style="left:50.8px;top:49px;font-size:8.6px;line-height:10px;color:#1a1a1a;letter-spacing:0.13px;">Bloomsbury·Publishing,·2019.·hard·cover·document.¶</div>
    <div class="a" style="left:20.5px;top:69px;font-size:8.6px;line-height:10px;color:#1a1a1a;">¶</div>
    <div class="a" style="left:12.5px;top:98.5px;width:3px;height:3px;background:#333"></div>
    <div class="a" style="left:18px;top:92px;font-size:13.2px;line-height:16px;color:#4a72b8">Index¶</div>
    <div class="a" style="left:17.8px;top:115.8px;width:111px;height:3.2px;border-top:1px solid #bdbdbd;border-bottom:1px solid #bdbdbd"></div>
    <div class="a" style="left:222px;top:115.8px;width:110px;height:3.2px;border-top:1px solid #bdbdbd;border-bottom:1px solid #bdbdbd"></div>
    <div class="a" style="left:129.3px;top:112.4px;font-size:7.55px;line-height:10px;color:#222;">Section Break (Continuous)</div>
    <div class="a" style="left:18.6px;top:131.7px;font-size:8.6px;line-height:10px;color:#1a1a1a;"><i>Chambers</i>,·23¶</div>
    <div class="a" style="left:18.6px;top:143.8px;font-size:8.6px;line-height:10px;color:#1a1a1a;">Hannay,·4,·11,·33,·41,·46,·47,·48,·</div>
    <div class="a" style="left:28.3px;top:155.9px;font-size:8.6px;line-height:10px;color:#1a1a1a;">59,·60,·61,·63,·64,·66,·68,·76,·82,·</div>
    <div class="a" style="left:28.3px;top:167.1px;font-size:8.6px;line-height:10px;color:#1a1a1a;">83,·84,·86¶</div>
    <div class="a" style="left:18.6px;top:179.2px;font-size:8.6px;line-height:10px;color:#1a1a1a;">Jopley,·40,·41,·60,·66¶</div>
    <div class="a" style="left:18.6px;top:203.3px;font-size:8.6px;line-height:10px;color:#1a1a1a;">¶</div>
    <div class="a" style="left:191px;top:131.7px;font-size:8.6px;line-height:10px;color:#1a1a1a;">Karolides,·4,·7,·11,·13,·20,·24,·25,·</div>
    <div class="a" style="left:200.9px;top:143.8px;font-size:8.6px;line-height:10px;color:#1a1a1a;">27,·59,·61,·62,·64,·80,·85¶</div>
    <div class="a" style="left:191px;top:155.9px;font-size:8.6px;line-height:10px;color:#1a1a1a;">Scudder,·8,·10,·11,·12,·13,·14,·15,·</div>
    <div class="a" style="left:200.9px;top:167.1px;font-size:8.6px;line-height:10px;color:#1a1a1a;">18,·20,·21,·24,·25,·26,·27,·28,·32,·</div>
    <div class="a" style="left:200.9px;top:179.2px;font-size:8.6px;line-height:10px;color:#1a1a1a;">33,·43,·46,·49,·50,·54,·59,·60,·61,·</div>
    <div class="a" style="left:200.9px;top:191.5px;font-size:8.6px;line-height:10px;color:#1a1a1a;">62,·72,·73,·78,·79,·80,·82,·85¶</div>
    <div class="a" style="left:318px;top:195.5px;width:12px;height:2px;border-top:1px solid #bdbdbd;border-bottom:1px solid #bdbdbd"></div>
    <div class="a" style="left:170px;top:529.6px;font-size:9px;line-height:10px;color:#666;-webkit-text-stroke:0">88¶</div>
    </div>
    <div class="a" style="left:803.3px;top:0;width:9.5px;height:571px;background:#dadada"></div>
    <div class="a" style="left:803.3px;top:2px;width:9.5px;height:10px;background:#fff;border:1px solid #c8c8c8"></div>
    <svg class="a" style="left:805.5px;top:5px" width="5" height="3" viewBox="0 0 5 3"><path d="M0 3h5L2.5 0z" fill="#555"/></svg>
    <div class="a" style="left:803.3px;top:547.7px;width:9.5px;height:11.6px;background:#fff;border:1px solid #d0d0d0"></div>
    <div class="a" style="left:803.3px;top:559.8px;width:9.5px;height:9.5px;background:#fff;border:1px solid #c8c8c8"></div>
    <svg class="a" style="left:805.5px;top:563px" width="5" height="3" viewBox="0 0 5 3"><path d="M0 0h5L2.5 3z" fill="#555"/></svg>
    
    <svg class="a" style="left:0;top:0" width="815" height="571" viewBox="254 128 815 571">
      <defs><clipPath id="shc"><path d="M0,0 H117.6 V50 C117.6,90 90,115 58.8,130 C27.6,115 0,90 0,50 Z"/></clipPath>
      <g id="lion"><path d="M18.4,0.37 L23.55,0 L30.9,1.1 L34.6,3.3 L36.8,5.5 L40.8,8.8 L37.9,11.4 L40.5,15.1 L36.8,16.6 L38.3,21 L35.3,23.9 L36.8,27.6 L33.9,29.8 L35.3,34.2 L32.4,37.2 L31.6,44.5 L28,37.9 L25,41.95 L22.1,36.4 L16.9,37.9 L16.2,32.75 L9.6,35.7 L11,29.8 L2.2,31.6 L6.6,26.1 L0,26.5 L7.4,20.2 L11.8,18 L15.5,17.3 L14.7,12.9 L17.7,11 L21,11.4 L24.3,13.6 L23.55,9.9 L19.9,7.7 L16.9,4.8 L17.7,1.8 Z" fill="#f7f7f7" stroke="#e2e2e2" stroke-width="0.3"/><path d="M13,21 C19,20 25,24 29,33 M9,26 C15,24 21,28 24,37 M17,15 C23,16 29,20 33,28 M24,14 C29,15 33,18 36,23 M5,29 C10,28 14,30 17,35" fill="none" stroke="#dadada" stroke-width="0.45"/><path d="M10.7,2.6 C10.8,5 13,6.5 16.9,8.8 L24.3,13.2 L23.6,10.7 L16.2,7 C13.5,5.5 12,4.5 11,2.2 Z" fill="#e8141b" stroke="#e8141b" stroke-width="0.9"/><ellipse cx="27.2" cy="4.6" rx="1.3" ry="1" fill="#111"/><path d="M25.6,3.4 C27,2.4 30,2.3 31.6,3.2" fill="none" stroke="#222" stroke-width="0.6"/></g></defs>
      <path d="M407,287 L390,318" stroke="#d6ecd6" stroke-width="0.6"/>
      <g transform="translate(437.2,225.7) rotate(27)">
        <path d="M0,0 H117.6 V50 C117.6,90 90,115 58.8,130 C27.6,115 0,90 0,50 Z" fill="#0b6fc4" stroke="#5d8f5d" stroke-width="0.8"/>
        <rect x="-5" y="45" width="130" height="26" fill="#fff" clip-path="url(#shc)"/>
      </g>
      <use href="#lion" x="425.3" y="237"/>
      <use href="#lion" x="487.4" y="269"/>
      <use href="#lion" x="422.5" y="318.2"/>
      <circle cx="479" cy="217.8" r="25.2" fill="#000"/>
      <circle cx="524.5" cy="241.2" r="25.2" fill="#000"/>
      <path d="M475.8,208.6 C478.5,205.6 486.5,205.2 487.4,211.2 C487.9,214.8 483.5,216.9 479.2,217 C485,217.2 486.3,221 484.8,224.2 C482.3,229.6 472,229.3 468.6,223.4" fill="none" stroke="#fff" stroke-width="2.9" stroke-linecap="butt"/>
      <circle cx="526.2" cy="235.4" r="5.9" fill="none" stroke="#fff" stroke-width="2.9"/><path d="M532.1,235.8 C532.3,244.5 525.5,252 515.5,246.8" fill="none" stroke="#fff" stroke-width="2.9"/>
    </svg>
  </div>
  <div id="styles">
    <div class="a" style="left:8.3px;top:10.4px;font-size:12.8px;line-height:16px;color:#3560a3">Styles</div>
    <svg class="a" style="left:185px;top:13.5px" width="7" height="4" viewBox="0 0 7 4"><path d="M0 0h7L3.5 4z" fill="#555"/></svg>
    <svg class="a" style="left:212.5px;top:11.8px" width="8" height="8" viewBox="0 0 8 8"><path d="M0.8 0.8l6.4 6.4M7.2 0.8L0.8 7.2" stroke="#444" stroke-width="1.1"/></svg>
    <div class="a" style="left:7.8px;top:31.5px;width:214.8px;height:482.2px;background:#fff"></div>
    <div class="a" style="left:8.3px;top:317.6px;width:199.1px;height:20.6px;border:1.5px solid #2b579a"></div>
    <div class="a" style="left:13.3px;top:37.1px;font-size:7.5px;line-height:12px;color:#222;font-family:'Liberation Sans',sans-serif;">Clear All</div>
    <div class="a" style="left:13.3px;top:59.0px;font-size:9px;line-height:12px;color:#222;font-family:'Liberation Sans',sans-serif;">Bibliography</div>
    <div class="a" style="left:200.5px;top:59.4px;font-size:8px;line-height:10px;color:#555;font-family:'Liberation Serif',serif">¶</div>
    <div class="a" style="left:13.3px;top:81.7px;font-size:10.5px;line-height:12px;color:#111;font-family:'Liberation Serif',serif;">center</div>
    <div class="a" style="left:200.5px;top:81.4px;font-size:8px;line-height:10px;color:#555;font-family:'Liberation Serif',serif">¶</div>
    <div class="a" style="left:13.3px;top:102.8px;font-size:9.4px;line-height:12px;color:#222;font-family:'Liberation Sans',sans-serif;">Footer</div>
    <div class="a" style="left:198px;top:102.8px;font-size:7.5px;line-height:10px;color:#555;font-family:'Liberation Serif',serif;text-decoration:underline">¶a</div>
    <div class="a" style="left:13.3px;top:124.8px;font-size:8.3px;line-height:12px;color:#222;font-family:'Liberation Sans',sans-serif;">Footnote Text</div>
    <div class="a" style="left:198px;top:124.7px;font-size:7.5px;line-height:10px;color:#555;font-family:'Liberation Serif',serif;text-decoration:underline">¶a</div>
    <div class="a" style="left:88.7px;top:147.5px;font-size:9.9px;line-height:12px;color:#111;font-family:'Liberation Serif',serif;">Header</div>
    <div class="a" style="left:198px;top:146.7px;font-size:7.5px;line-height:10px;color:#555;font-family:'Liberation Serif',serif;text-decoration:underline">¶a</div>
    <div class="a" style="left:13.5px;top:168.5px;font-size:12.3px;line-height:12px;color:#2f5ea8;font-family:'Liberation Sans',sans-serif;">Heading 1</div>
    <div class="a" style="left:198px;top:168.6px;font-size:7.5px;line-height:10px;color:#555;font-family:'Liberation Serif',serif;text-decoration:underline">¶a</div>
    <div class="a" style="left:13.5px;top:190.6px;font-size:11px;line-height:12px;color:#111;font-family:'Liberation Serif',serif;">Heading 2</div>
    <div class="a" style="left:198px;top:190.5px;font-size:7.5px;line-height:10px;color:#555;font-family:'Liberation Serif',serif;text-decoration:underline">¶a</div>
    <div class="a" style="left:13.5px;top:212.5px;font-size:9.6px;line-height:12px;color:#3a5f9a;font-family:'Liberation Sans',sans-serif;">Heading 3</div>
    <div class="a" style="left:198px;top:212.4px;font-size:7.5px;line-height:10px;color:#555;font-family:'Liberation Serif',serif;text-decoration:underline">¶a</div>
    <div class="a" style="left:13.5px;top:234.4px;font-size:9px;line-height:12px;color:#3a64a8;font-family:'Liberation Sans',sans-serif;font-style:italic">Heading 4</div>
    <div class="a" style="left:198px;top:234.4px;font-size:7.5px;line-height:10px;color:#555;font-family:'Liberation Serif',serif;text-decoration:underline">¶a</div>
    <div class="a" style="left:13.5px;top:256.3px;font-size:9.2px;line-height:12px;color:#0563c1;font-family:'Liberation Sans',sans-serif;text-decoration:underline">Hyperlink</div>
    <div class="a" style="left:201.5px;top:255.8px;font-size:10px;line-height:10px;color:#555;font-family:'Liberation Serif',serif">a</div>
    <div class="a" style="left:13.5px;top:278.0px;font-size:10.7px;line-height:12px;color:#111;font-family:'Liberation Serif',serif;">letter</div>
    <div class="a" style="left:200.5px;top:278.7px;font-size:8px;line-height:10px;color:#555;font-family:'Liberation Serif',serif">¶</div>
    <div class="a" style="left:13.5px;top:299.9px;font-size:10.4px;line-height:12px;color:#111;font-family:'Liberation Serif',serif;">msonormal</div>
    <div class="a" style="left:200.5px;top:300.7px;font-size:8px;line-height:10px;color:#555;font-family:'Liberation Serif',serif">¶</div>
    <div class="a" style="left:13.5px;top:322.1px;font-size:9.3px;line-height:12px;color:#111;font-family:'Liberation Sans',sans-serif;">Normal</div>
    <div class="a" style="left:200.5px;top:322.6px;font-size:8px;line-height:10px;color:#555;font-family:'Liberation Serif',serif">¶</div>
    <div class="a" style="left:13.5px;top:344.5px;font-size:10.1px;line-height:12px;color:#111;font-family:'Liberation Serif',serif;">p2</div>
    <div class="a" style="left:200.5px;top:344.5px;font-size:8px;line-height:10px;color:#555;font-family:'Liberation Serif',serif">¶</div>
    <div class="a" style="left:13.5px;top:366.4px;font-size:10.6px;line-height:12px;color:#111;font-family:'Liberation Serif',serif;">poem</div>
    <div class="a" style="left:200.5px;top:366.4px;font-size:8px;line-height:10px;color:#555;font-family:'Liberation Serif',serif">¶</div>
    <div class="a" style="left:13.5px;top:388.4px;font-size:10.4px;line-height:12px;color:#111;font-family:'Liberation Serif',serif;">right</div>
    <div class="a" style="left:200.5px;top:388.4px;font-size:8px;line-height:10px;color:#555;font-family:'Liberation Serif',serif">¶</div>
    <div class="a" style="left:84.4px;top:409.5px;font-size:9px;line-height:12px;color:#222;font-family:'Liberation Serif',serif;letter-spacing:1px">Subtitle</div>
    <div class="a" style="left:198px;top:409.8px;font-size:7.5px;line-height:10px;color:#555;font-family:'Liberation Serif',serif;text-decoration:underline">¶a</div>
    <div class="a" style="left:29.3px;top:433.3px;font-size:8.2px;line-height:12px;color:#222;font-family:'Liberation Sans',sans-serif;">task03content</div>
    <div class="a" style="left:200.5px;top:432.2px;font-size:8px;line-height:10px;color:#555;font-family:'Liberation Serif',serif">¶</div>
    <div class="a" style="left:92.2px;top:454.3px;font-size:12px;line-height:12px;color:#333;font-family:'Liberation Sans',sans-serif;">Title</div>
    <div class="a" style="left:198px;top:453.7px;font-size:7.5px;line-height:10px;color:#555;font-family:'Liberation Serif',serif;text-decoration:underline">¶a</div>
    <div class="a" style="left:13.5px;top:475.7px;font-size:7.8px;line-height:12px;color:#222;font-family:'Liberation Sans',sans-serif;">TOC 1</div>
    <div class="a" style="left:200.5px;top:476.1px;font-size:8px;line-height:10px;color:#555;font-family:'Liberation Serif',serif">¶</div>
    <div class="a" style="left:8px;top:516.8px;width:8.4px;height:8.1px;background:#fff;border:1px solid #bdbdbd"></div>
    <svg class="a" style="left:9.5px;top:518.5px" width="6" height="5" viewBox="0 0 6 5"><path d="M0.5 2.5 2.2 4.2 5.5 0.6" fill="none" stroke="#444" stroke-width="0.8"/></svg>
    <div class="a" style="left:20px;top:517.4px;font-size:7.7px;line-height:10px;color:#444">Show Preview</div>
    <div class="a" style="left:8px;top:531.7px;width:8.4px;height:7.7px;background:#fff;border:1px solid #bdbdbd"></div>
    <div class="a" style="left:20px;top:532px;font-size:7.6px;line-height:10px;color:#444">Disable Linked Styles</div>
    <div class="a" style="left:8px;top:545.6px;width:15.3px;height:15.1px;background:#fff;border:1px solid #c8c8c8"></div>
    <div class="a" style="left:10.5px;top:546.5px;font-size:11px;line-height:12px;color:#555">A</div>
    <div class="a" style="left:30.4px;top:545.6px;width:15.3px;height:15.1px;background:#fff;border:1px solid #c8c8c8"></div>
    <div class="a" style="left:32.9px;top:546.5px;font-size:11px;line-height:12px;color:#555">A</div>
    <div class="a" style="left:52.2px;top:545.6px;width:15.3px;height:15.1px;background:#fff;border:1px solid #c8c8c8"></div>
    <div class="a" style="left:54.7px;top:546.5px;font-size:11px;line-height:12px;color:#555">A</div>
    <svg class="a" style="left:16.5px;top:553.5px" width="5" height="5" viewBox="0 0 5 5"><path d="M2.5 0.3v4.4M0.3 2.5h4.4" stroke="#3cb05a" stroke-width="1.1"/></svg>
    <svg class="a" style="left:37.5px;top:552.5px" width="7" height="7" viewBox="0 0 7 7"><circle cx="3" cy="3" r="2" fill="none" stroke="#3b8ad0" stroke-width="0.9"/><path d="M4.4 4.4 6.5 6.5" stroke="#3b8ad0" stroke-width="1"/></svg>
    <svg class="a" style="left:59.5px;top:553.5px" width="7" height="5" viewBox="0 0 7 5"><path d="M0.5 2.5 2.5 4.3 6.5 0.5" fill="none" stroke="#3cb05a" stroke-width="0.9"/></svg>
    <div class="a" style="left:74.5px;top:545.6px;width:45.1px;height:15.1px;background:#fff;border:1px solid #c8c8c8"></div>
    <div class="a" style="left:79.7px;top:549.2px;font-size:8px;line-height:10px;color:#444">Options...</div>
  </div>
  <div id="status">
    <div class="a" style="left:5px;top:2px;font-size:7.4px;line-height:10px;color:#555">Page 88 of 88</div>
    <div class="a" style="left:63.7px;top:2px;font-size:7.7px;line-height:10px;color:#555">41182 words</div>
    <svg class="a" style="left:119.5px;top:2.5px" width="11" height="10" viewBox="0 0 11 10"><path d="M1 1.5h3.5c.8 0 1 .5 1 1V9c0-.5-.3-1-1-1H1z M5.5 2.5c0-.5.3-1 1-1H10V8H6.5c-.7 0-1 .5-1 1" fill="none" stroke="#555" stroke-width="0.8"/><path d="M6.5 5.5l3 3M9.5 5.5l-3 3" stroke="#555" stroke-width="0.8"/></svg>
    <div class="a" style="left:141.4px;top:2px;font-size:7.5px;line-height:10px;color:#555">English (United States)</div>
    <svg class="a" style="left:1040px;top:2.5px" width="10" height="10" viewBox="0 0 10 10"><path d="M0.5 2.5V0.5h2M7.5 0.5h2v2M9.5 7.5v2h-2M2.5 9.5h-2v-2" fill="none" stroke="#555" stroke-width="0.8"/><path d="M3 2h3l1.5 1.5V8H3z" fill="none" stroke="#555" stroke-width="0.8"/></svg>
    <div class="a" style="left:1052px;top:2px;font-size:7.2px;line-height:10px;color:#555">Focus</div>
    <svg class="a" style="left:1088px;top:2.5px" width="10" height="9" viewBox="0 0 10 9"><path d="M0.5 1h4v7h-4zM5.5 1h4v7h-4z" fill="#ddd" stroke="#666" stroke-width="0.7"/></svg>
    <div class="a" style="left:1107.4px;top:0;width:25.2px;height:14px;background:#d2d0ce"></div>
    <svg class="a" style="left:1115px;top:2px" width="9" height="10" viewBox="0 0 9 10"><path d="M1 0.5h7v9H1z" fill="#e6e6e6" stroke="#555" stroke-width="0.8"/><path d="M2.5 2.5h4M2.5 4h4M2.5 5.5h4M2.5 7h4" stroke="#777" stroke-width="0.6"/></svg>
    <svg class="a" style="left:1141.5px;top:2px" width="11" height="11" viewBox="0 0 11 11"><path d="M1 0.5h7v9H1z" fill="#ddd" stroke="#555" stroke-width="0.8"/><circle cx="8" cy="8" r="2.6" fill="#555"/><path d="M8 7.2v2.2" stroke="#fff" stroke-width="0.8"/></svg>
    <div class="a" style="left:1164px;top:6.5px;width:5px;height:1px;background:#666"></div>
    <div class="a" style="left:1173px;top:6.5px;width:66px;height:1px;background:#a0a0a0"></div>
    <div class="a" style="left:1204px;top:3px;width:4px;height:8px;background:#666"></div>
    <svg class="a" style="left:1242.4px;top:4px" width="6" height="6" viewBox="0 0 6 6"><path d="M3 0.3v5.4M0.3 3h5.4" stroke="#666" stroke-width="0.9"/></svg>
    <div class="a" style="left:1257px;top:2px;font-size:7.5px;line-height:10px;color:#555">100%</div>
  </div>
</div>
<div style="position:absolute;left:21px;top:714px;width:32px;height:5px;background:#3a3128"></div>
<div style="position:absolute;left:53px;top:714px;width:229px;height:5px;background:#f0f0f0"></div>
<div style="position:absolute;left:282px;top:714px;width:1019px;height:5px;background:linear-gradient(90deg,#1b2326 0%,#1e2528 60%,#3a3128 100%)"></div>
<div style="position:absolute;left:580px;top:714px;width:29px;height:5px;background:#4a5155"></div>
</body></html>
